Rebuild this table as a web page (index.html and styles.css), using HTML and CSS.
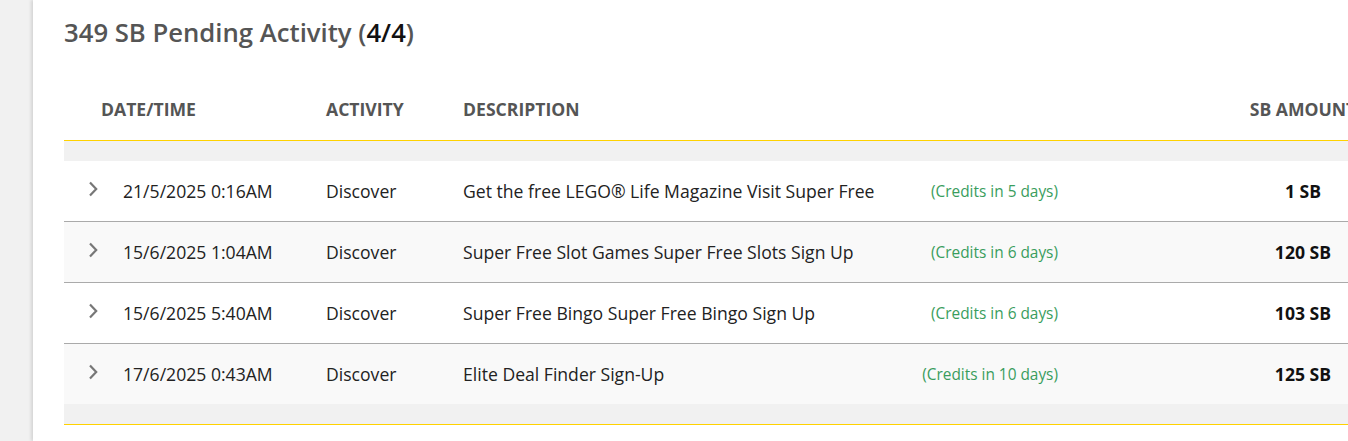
FILE: index.html
```html
<!DOCTYPE html>
<html>
<head>
<meta charset="utf-8">
<link rel="stylesheet" href="styles.css">
</head>
<body>
<div class="page">
  <div class="card">
    <h1 class="title">349 SB Pending Activity (<span class="count">4/4</span>)</h1>
    <div class="table">
      <div class="thead">
        <div class="th th-date">DATE/TIME</div>
        <div class="th">ACTIVITY</div>
        <div class="th">DESCRIPTION</div>
        <div class="th"></div>
        <div class="th"></div>
        <div class="th th-amount">SB AMOUNT</div>
      </div>
      <div class="rule"></div>
      <div class="band"></div>
      <div class="row">
        <div class="cell chev"><svg width="10" height="16" viewBox="0 0 10 16"><polyline points="2,1.5 8.2,8 2,14.5" fill="none" stroke="#777" stroke-width="2.2"/></svg></div>
        <div class="cell">21/5/2025 0:16AM</div>
        <div class="cell">Discover</div>
        <div class="cell">Get the free LEGO® Life Magazine Visit Super Free</div>
        <div class="cell credits">(Credits in 5 days)</div>
        <div class="cell"></div>
        <div class="cell amount">1 SB</div>
      </div>
      <div class="row alt">
        <div class="cell chev"><svg width="10" height="16" viewBox="0 0 10 16"><polyline points="2,1.5 8.2,8 2,14.5" fill="none" stroke="#777" stroke-width="2.2"/></svg></div>
        <div class="cell">15/6/2025 1:04AM</div>
        <div class="cell">Discover</div>
        <div class="cell">Super Free Slot Games Super Free Slots Sign Up</div>
        <div class="cell credits">(Credits in 6 days)</div>
        <div class="cell"></div>
        <div class="cell amount">120 SB</div>
      </div>
      <div class="row">
        <div class="cell chev"><svg width="10" height="16" viewBox="0 0 10 16"><polyline points="2,1.5 8.2,8 2,14.5" fill="none" stroke="#777" stroke-width="2.2"/></svg></div>
        <div class="cell">15/6/2025 5:40AM</div>
        <div class="cell">Discover</div>
        <div class="cell">Super Free Bingo Super Free Bingo Sign Up</div>
        <div class="cell credits">(Credits in 6 days)</div>
        <div class="cell"></div>
        <div class="cell amount">103 SB</div>
      </div>
      <div class="row alt last">
        <div class="cell chev"><svg width="10" height="16" viewBox="0 0 10 16"><polyline points="2,1.5 8.2,8 2,14.5" fill="none" stroke="#777" stroke-width="2.2"/></svg></div>
        <div class="cell">17/6/2025 0:43AM</div>
        <div class="cell">Discover</div>
        <div class="cell">Elite Deal Finder Sign-Up</div>
        <div class="cell credits">(Credits in 10 days)</div>
        <div class="cell"></div>
        <div class="cell amount">125 SB</div>
      </div>
      <div class="band"></div>
      <div class="rule"></div>
    </div>
  </div>
</div>
</body>
</html>
```

FILE: styles.css
```css
html, body {
  margin: 0;
  padding: 0;
  background: #f1f1f1;
  overflow: hidden;
  font-family: "Open Sans", "Liberation Sans", sans-serif;
}
.page {
  height: 441px;
  overflow: hidden;
}
.card {
  margin-left: 33px;
  background: #fff;
  height: 441px;
  padding-left: 31px;
  box-shadow: -2px 0 3px rgba(0,0,0,0.12);
  width: 1400px;
}
.title {
  margin: 0;
  padding-top: 16px;
  font-size: 25.7px;
  line-height: 34px;
  font-weight: 600;
  color: #555;
}
.count {
  color: #111;
}
.table {
  margin-top: 29px;
  width: 1339px;
}
.thead, .row {
  display: grid;
  grid-template-columns: 59px 203px 137px 417px 178px 145px 200px;
}
.thead {
  grid-template-columns: 262px 137px 417px 178px 145px 200px;
  height: 61px;
  align-items: center;
  padding-bottom: 1px;
  box-sizing: border-box;
}
.rule {
  height: 1px;
  background: #ffd200;
}
.th {
  font-size: 17.6px;
  font-weight: 700;
  color: #555;
}
.th-date {
  padding-left: 37px;
}
.th-amount {
  text-align: center;
  white-space: nowrap;
}
.band {
  height: 20px;
  background: #f1f1f1;
}
.row {
  height: 60px;
  align-items: center;
  border-bottom: 1px solid #aaa;
  background: #fff;
}
.row.alt {
  background: #f9f9f9;
}
.row.last {
  border-bottom: none;
}
.cell {
  font-size: 17.6px;
  color: #222;
  white-space: nowrap;
}
.chev {
  display: flex;
  justify-content: center;
  padding-right: 1px;
  margin-top: -5px;
}
.chev svg {
  display: block;
}
.credits {
  text-align: right;
  color: #3a9d5d;
  font-size: 15.4px;
}
.amount {
  text-align: center;
  font-weight: 700;
  color: #111;
}
```
